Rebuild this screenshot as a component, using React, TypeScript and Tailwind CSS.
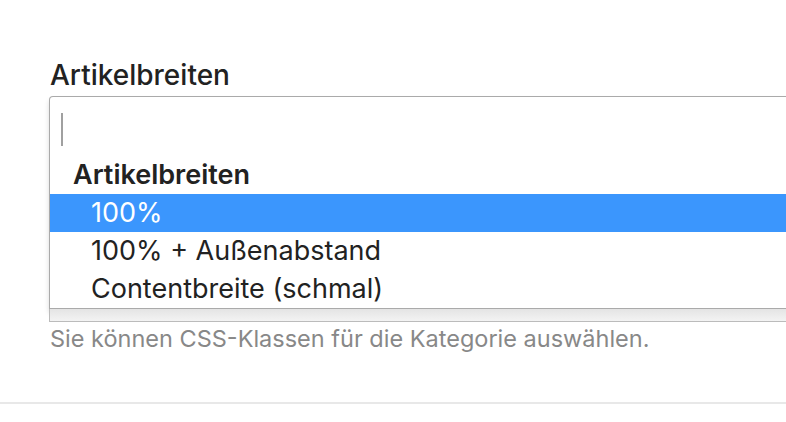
export default function App() {
  const options = ['100%', '100% + Außenabstand', 'Contentbreite (schmal)']
  const active = 0

  return (
    <div className="relative h-[422px] w-[786px] overflow-hidden bg-white font-['Inter','Liberation_Sans',sans-serif] text-[#222]">
      <div className="pl-[49px] pt-[58px]">
        <div className="mb-[4px] pl-[1px] text-[28px] leading-[34px] font-medium">Artikelbreiten</div>

        {/* chosen-like multi select, opened */}
        <div className="w-[760px]">
          <div className="rounded-t-[4px] border border-b-0 border-[#aaa] bg-white shadow-[0_4px_5px_rgba(0,0,0,0.15)]">
            <div className="h-[59px] pl-[11px] pt-[16px]">
              <div className="h-[33px] w-[2px] bg-[#a0a0a0]" />
            </div>
            <ul className="border-b border-[#aaa] bg-white">
              <li className="h-[38px] pl-[23px] text-[27px] leading-[38px] font-semibold">Artikelbreiten</li>
              {options.map((opt, i) => (
                <li
                  key={opt}
                  className={
                    i === active
                      ? 'h-[38px] bg-[#3b96fd] pl-[41px] text-[27px] leading-[38px] text-white'
                      : 'h-[38px] pl-[41px] text-[27px] leading-[38px]'
                  }
                >
                  {opt}
                </li>
              ))}
            </ul>
          </div>
          <div className="h-[13px] border-b border-l border-[#bbb] bg-gradient-to-b from-[#e4e4e4] to-[#f3f3f3]" />
        </div>

        <p className="mt-[2px] pl-[1px] text-[23.5px] leading-[30px] text-[#888]">
          Sie können CSS-Klassen für die Kategorie auswählen.
        </p>
      </div>

      <div className="absolute left-0 top-[402px] h-[2px] w-full bg-[#e8e8e8]" />
    </div>
  )
}
